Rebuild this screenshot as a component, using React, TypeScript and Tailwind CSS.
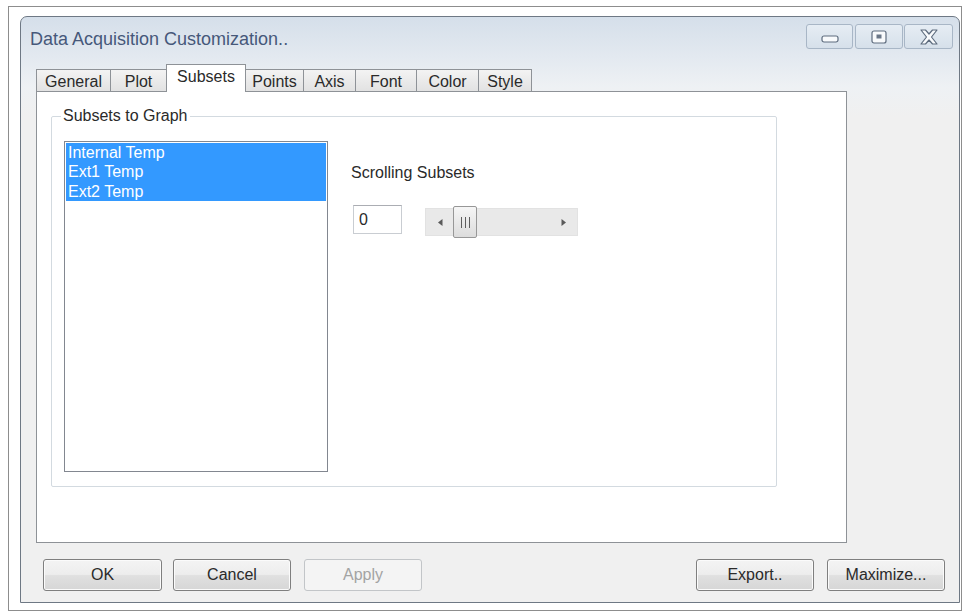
import React from "react";

function Tab({ label, w, selected }: { label: string; w: number; selected?: boolean }) {
  if (selected) {
    return (
      <div
        className="relative z-10 -ml-px h-[28px] -mb-px border border-b-0 border-[#8e9297] bg-white flex items-start justify-center pt-[2px] text-[16px] leading-[19px] text-[#2a2a2a]"
        style={{ width: w }}
      >
        {label}
      </div>
    );
  }
  return (
    <div
      className="-ml-px first:ml-0 h-[22px] border border-b-0 border-[#8e9297] bg-gradient-to-b from-[#f3f3f3] to-[#e2e2e2] flex items-center justify-center pt-[1px] text-[16px] leading-[19px] text-[#2a2a2a]"
      style={{ width: w }}
    >
      {label}
    </div>
  );
}

function Btn({ label, w, disabled }: { label: string; w: number; disabled?: boolean }) {
  return (
    <div
      className={
        disabled
          ? "h-[32px] rounded-[3px] border border-[#c2c5c8] bg-[#f4f4f4] flex items-center justify-center text-[16px] text-[#a3a3a3]"
          : "h-[32px] rounded-[3px] border border-[#7f7f7f] bg-[linear-gradient(to_bottom,#f4f4f4_0%,#ededed_48%,#e0e0e0_52%,#d6d6d6_100%)] shadow-[inset_0_0_0_1px_#fbfbfb] flex items-center justify-center text-[16px] text-[#2a2a2a]"
      }
      style={{ width: w }}
    >
      {label}
    </div>
  );
}

export default function App() {
  return (
    <div className="w-[971px] h-[612px] bg-white font-['Liberation_Sans',Arial,sans-serif] pl-[8px] pt-[6px] overflow-hidden">
      <div className="w-[954px] h-[605px] border border-[#8d8d8d] bg-white pl-[11px] pt-[9px]">
        <div className="w-[940px] h-[587px] border border-[#6e7884] rounded-t-[7px] overflow-hidden flex flex-col bg-[linear-gradient(to_bottom,#d5dfea_0px,#e3e9f0_40px,#eef1f4_70px,#f0f0f0_100px)]">
          {/* Title bar */}
          <div className="h-[42px] flex items-start pl-[9px] pr-[6px] shrink-0">
            <span className="mt-[11px] text-[18px] leading-[22px] text-[#46587a]">
              Data Acquisition Customization..
            </span>
            <div className="flex-1" />
            <div className="mt-[7px] flex">
              <div className="w-[47px] h-[25px] rounded-[3px] border border-[#a8b6c6] bg-gradient-to-b from-[#e6edf4] to-[#d6e0ea] flex items-end justify-center pb-[5px]">
                <svg width="18" height="8" viewBox="0 0 18 8">
                  <rect x="1" y="1" width="16" height="6" rx="2" fill="#f8fafc" stroke="#5e6c7e" strokeWidth="1.2" />
                </svg>
              </div>
              <div className="ml-[2px] w-[48px] h-[25px] rounded-[3px] border border-[#a8b6c6] bg-gradient-to-b from-[#e6edf4] to-[#d6e0ea] flex items-center justify-center">
                <svg width="16" height="14" viewBox="0 0 16 14">
                  <rect x="1" y="1" width="14" height="12" rx="2" fill="#f8fafc" stroke="#5e6c7e" strokeWidth="1.2" />
                  <rect x="5.5" y="4.5" width="5" height="4" fill="#6a7788" />
                </svg>
              </div>
              <div className="ml-px w-[49px] h-[25px] rounded-[3px] border border-[#a8b6c6] bg-gradient-to-b from-[#e6edf4] to-[#d6e0ea] flex items-center justify-center">
                <svg width="20" height="18" viewBox="0 0 20 18">
                  <polygon
                    points="2,2 6.5,2 10,6 13.5,2 18,2 12.5,9 18,16 13.5,16 10,12 6.5,16 2,16 7.5,9"
                    fill="#f8fafc"
                    stroke="#5e6c7e"
                    strokeWidth="1.2"
                    strokeLinejoin="round"
                  />
                </svg>
              </div>
            </div>
          </div>

          {/* Tabs */}
          <div className="mt-[5px] pl-[15px] h-[27px] flex items-end shrink-0">
            <Tab label="General" w={75} />
            <Tab label="Plot" w={57} />
            <Tab label="Subsets" w={80} selected />
            <Tab label="Points" w={59} />
            <Tab label="Axis" w={53} />
            <Tab label="Font" w={62} />
            <Tab label="Color" w={63} />
            <Tab label="Style" w={54} />
          </div>

          {/* Panel */}
          <div className="ml-[15px] w-[811px] h-[452px] border border-[#8e9297] bg-white pl-[14px] pt-[24px] shrink-0">
            <div className="relative w-[726px] h-[371px] border border-[#d3dae0] shadow-[inset_1px_1px_0_#ffffff] rounded-[2px] pl-[12px] pt-[24px] flex items-start">
              <span className="absolute left-[9px] top-[-11px] bg-white px-[2px] text-[16px] leading-[19px] text-[#2a2a2a]">
                Subsets to Graph
              </span>

              {/* Listbox */}
              <div className="w-[264px] h-[331px] border border-[#828790] bg-white p-px shrink-0">
                <div className="bg-[#3399ff] text-white text-[16px] leading-[19.4px] pl-[2px]">
                  <div>Internal Temp</div>
                  <div>Ext1 Temp</div>
                  <div>Ext2 Temp</div>
                </div>
              </div>

              {/* Right column */}
              <div className="ml-[23px] pt-[22px] flex flex-col">
                <div className="text-[16px] leading-[19px] text-[#2a2a2a]">Scrolling Subsets</div>
                <div className="mt-[23px] ml-[2px] flex items-start">
                  <div className="w-[49px] h-[29px] border border-[#c9cdd2] border-t-[#abadb3] bg-white pl-[5px] flex items-center text-[16px] text-[#2a2a2a]">
                    0
                  </div>
                  <div className="ml-[23px] mt-[3px] w-[153px] h-[28px] bg-[#e9e9e9] border border-[#e2e2e2] flex items-center">
                    <div className="w-[27px] h-full flex items-center justify-center pl-[1px]">
                      <svg width="5" height="7" viewBox="0 0 5 7">
                        <polygon points="4.5,0 0,3.5 4.5,7" fill="#5a5a5a" />
                      </svg>
                    </div>
                    <div className="w-[24px] h-[32px] -my-[2px] rounded-[2px] border border-[#979797] bg-gradient-to-b from-[#f6f6f6] to-[#dcdcdc] flex items-center justify-center gap-[3px]">
                      <div className="w-px h-[11px] bg-[#5e5e5e]" />
                      <div className="w-px h-[11px] bg-[#5e5e5e]" />
                      <div className="w-px h-[11px] bg-[#5e5e5e]" />
                    </div>
                    <div className="flex-1" />
                    <div className="w-[27px] h-full flex items-center justify-center">
                      <svg width="5" height="7" viewBox="0 0 5 7">
                        <polygon points="0.5,0 5,3.5 0.5,7" fill="#5a5a5a" />
                      </svg>
                    </div>
                  </div>
                </div>
              </div>
            </div>
          </div>

          {/* Buttons */}
          <div className="mt-[16px] pl-[22px] pr-[14px] flex items-start shrink-0">
            <Btn label="OK" w={119} />
            <div className="w-[11px]" />
            <Btn label="Cancel" w={118} />
            <div className="w-[13px]" />
            <Btn label="Apply" w={118} disabled />
            <div className="flex-1" />
            <Btn label="Export.." w={118} />
            <div className="w-[13px]" />
            <Btn label="Maximize..." w={118} />
          </div>
        </div>
      </div>
    </div>
  );
}
